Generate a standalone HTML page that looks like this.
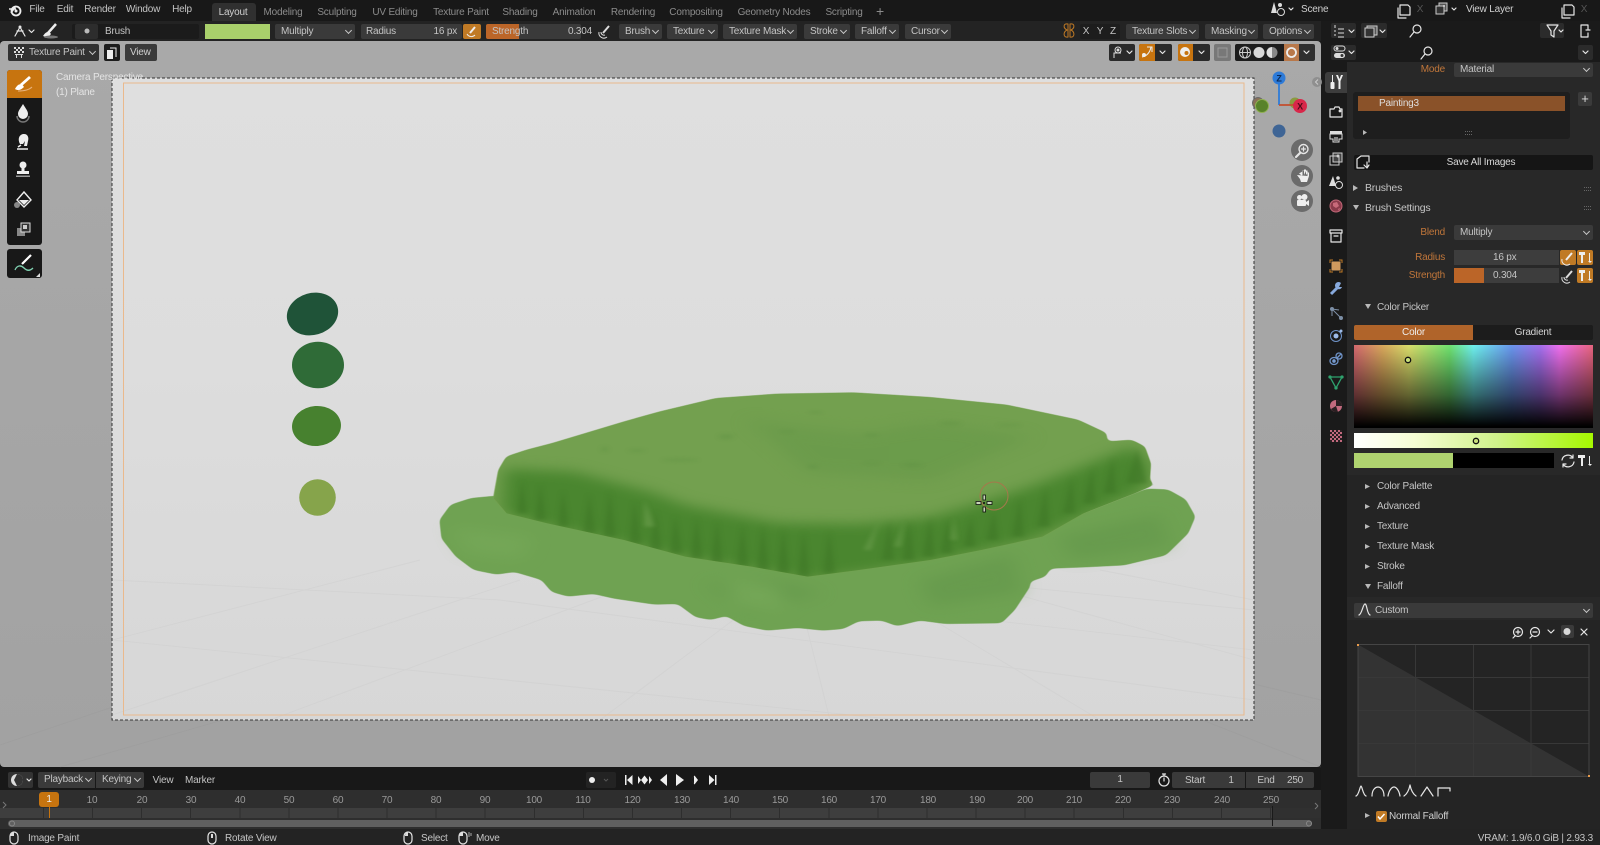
<!DOCTYPE html>
<html><head><meta charset="utf-8"><title>Blender Texture Paint</title>
<style>
*{box-sizing:border-box}
html,body{margin:0;padding:0;width:1600px;height:845px;overflow:hidden;background:#181818}
body{font:10px/17px "Liberation Sans",sans-serif;letter-spacing:-.2px;color:#c4c4c4;position:relative}
.a{position:absolute;white-space:nowrap}
.c{position:absolute;white-space:nowrap;transform:translateX(-50%)}
.r{position:absolute;white-space:nowrap;transform:translateX(-100%)}
.b{position:absolute;background:#3a3a3a;border-radius:2px;padding-left:6px;white-space:nowrap;color:#c4c4c4}
.d::after{content:"";position:absolute;right:4px;top:50%;width:4px;height:4px;margin-top:-4px;border-right:1px solid #c8c8c8;border-bottom:1px solid #c8c8c8;transform:rotate(45deg)}
.o{color:#c0763a}
svg{position:absolute;left:0;top:0}
.w{stroke:#e6e6e6;fill:none;stroke-width:1.2;stroke-linecap:round;stroke-linejoin:round}
.f{fill:#e6e6e6;stroke:none}
</style></head><body>

<!-- 3D viewport -->
<div class="a" style="left:0;top:41px;width:1321px;height:726px;background:linear-gradient(#a9a9a9,#a5a5a5 60%,#a2a2a2);border-radius:4px;overflow:hidden"></div>
<svg width="1600" height="845" viewBox="0 0 1600 845">
<defs>
<linearGradient id="fr" x1="0" y1="0" x2="0" y2="1"><stop offset="0" stop-color="#dfdfdf"/><stop offset=".45" stop-color="#dddddd"/><stop offset="1" stop-color="#d7d7d7"/></linearGradient>
<filter id="goo" x="-10%" y="-10%" width="120%" height="120%" color-interpolation-filters="sRGB"><feGaussianBlur stdDeviation="6"/><feComponentTransfer><feFuncA type="linear" slope="6" intercept="-2.500"/></feComponentTransfer></filter>
<filter id="bl" x="-30%" y="-30%" width="160%" height="160%" color-interpolation-filters="sRGB"><feGaussianBlur stdDeviation="20"/></filter>
<filter id="bm" x="-20%" y="-20%" width="140%" height="140%" color-interpolation-filters="sRGB"><feGaussianBlur stdDeviation="18"/></filter>
<filter id="bs" x="-40%" y="-40%" width="180%" height="180%" color-interpolation-filters="sRGB"><feGaussianBlur stdDeviation="5"/></filter>
<clipPath id="tp"><path d="M145 355 155 270 170 230 210 210 260 190 400 125 470 95 580 55 700 42 850 38 1000 52 1150 75 1290 120 1345 160 1345 185 1395 180 1420 200 1432 250 1430 300 1438 315 1400 340 1300 400 1220 470 1100 510 1000 540 860 570 760 590 650 560 520 530 400 480 250 430 170 400Z"/></clipPath>
<clipPath id="frc"><rect x="112" y="78" width="1142" height="642"/></clipPath>
</defs>
<g stroke="#8f8f8f" opacity=".2" fill="none"><path d="M0 745 400 610M1321 700 900 600M60 767 500 640M1321 767 1000 640"/></g>
<rect x="112" y="78" width="1142" height="642" fill="url(#fr)"/>
<g clip-path="url(#frc)" stroke="#cbcbcb" stroke-width="1" fill="none" opacity=".38">
<path d="M112 715 520 580M112 640 420 560M270 720 620 590M600 720 760 600M830 720 800 600M1100 720 900 600M1254 660 1000 590M1254 600 1100 570"/>
<path d="M112 580 500 600 1254 700M112 640 900 720M900 610 1254 650M1000 585 1254 610"/>
</g>
<rect x="112" y="78" width="1142" height="642" fill="none" stroke="#333" stroke-dasharray="3 2" stroke-width="1"/>
<rect x="123.5" y="83" width="1120.5" height="632" fill="none" stroke="#eab98c" stroke-width="1"/>

<!-- paint blobs -->
<ellipse cx="312.500" cy="314" rx="26" ry="21" transform="rotate(-16 312.500 314)" fill="#1f5338"/>
<ellipse cx="318" cy="365" rx="26" ry="23.300" fill="#2f6b37"/>
<ellipse cx="316.500" cy="426" rx="24.500" ry="20" transform="rotate(-4 316.500 426)" fill="#47812f"/>
<circle cx="317.500" cy="497.500" r="18.300" fill="#86a44b"/>

<!-- grass -->
<g transform="translate(420 380) scale(.5102 .3333)">
<g filter="url(#goo)"><path d="M150 347 100 354 60 374 38 420 42 476 70 530 105 570 150 584 185 576 238 600 258 636 290 650 340 642 380 656 460 674 505 672 540 712 570 720 600 708 635 738 680 752 740 744 790 752 830 747 860 724 905 722 935 739 980 722 1030 732 1140 730 1166 690 1196 620 1196 605 1226 590 1236 566 1300 562 1380 556 1462 526 1506 460 1520 410 1501 358 1466 328 1425 326 1300 400Z" fill="#6fa252"/></g>
<g filter="url(#bl)" opacity=".55"><path d="M560 610 700 600 790 640 640 700ZM980 600 1160 520 1180 640 1000 680ZM1250 470 1450 400 1470 500 1280 540Z" fill="#62964a"/><path d="M600 600 700 620 720 690 620 680ZM60 440 220 470 200 540 90 520Z" fill="#78aa5a"/></g>
<g filter="url(#goo)"><path d="M143 355 153 270 169 229 209 209 259 189 400 124 470 94 580 54 700 41 850 37 1000 51 1150 74 1290 119 1346 159 1347 184 1395 179 1421 199 1433 250 1431 300 1439 315 1401 341 1301 401 1221 471 1100 511 1000 541 860 571 760 591 650 561 520 531 400 481 250 431 169 401Z" fill="#73a04f"/></g>
<g clip-path="url(#tp)">
<path d="M640 120 860 160 1000 130 1200 170 1000 300 760 280Z" fill="#659748" opacity=".5" filter="url(#bl)"/>
<path d="M165 265 300 275 450 335 520 375 700 428 860 432 1000 412 1100 368 1200 318 1300 258 1400 198 1432 260 1420 330 1200 480 1000 550 760 600 500 530 250 440 160 400Z" fill="#4a862f" filter="url(#bm)"/>
<g fill="#3c7424" opacity=".5" filter="url(#bs)">
<path d="M190 400 210 400 200 300ZM225 420 247 420 236 310ZM270 440 292 440 280 330ZM320 460 344 460 332 340ZM360 470 384 470 372 330ZM410 490 434 490 420 360ZM450 510 474 510 462 390ZM490 520 514 520 500 405ZM530 535 554 535 542 410ZM570 550 594 550 582 420ZM620 560 644 560 632 430ZM660 570 684 570 672 430ZM700 580 724 580 712 440ZM740 590 764 590 752 450ZM790 580 814 580 802 450ZM905 540 929 540 920 420ZM945 540 969 540 960 420ZM985 530 1009 530 1000 410ZM1020 520 1044 520 1034 415ZM1065 500 1089 500 1080 410ZM1110 480 1134 480 1125 390ZM1160 470 1184 470 1176 350ZM1210 440 1234 440 1226 320ZM1260 400 1284 400 1278 290ZM1300 370 1324 370 1318 260ZM1340 340 1364 340 1358 230ZM1385 310 1425 310 1405 205Z"/>
</g>
<g fill="#7aa85a" opacity=".45" filter="url(#bs)"><path d="M870 510 884 510 900 420ZM930 500 942 500 950 420ZM440 440 460 440 440 360ZM1040 480 1052 480 1046 410Z"/></g>
<g fill="#619345" opacity=".45" filter="url(#bs)"><ellipse cx="600" cy="170" rx="14" ry="8"/><ellipse cx="720" cy="155" rx="16" ry="4"/><ellipse cx="885" cy="165" rx="14" ry="5"/><ellipse cx="1040" cy="130" rx="20" ry="5"/><ellipse cx="1155" cy="135" rx="22" ry="3"/><ellipse cx="425" cy="212" rx="16" ry="4"/><ellipse cx="362" cy="208" rx="6" ry="8"/><ellipse cx="775" cy="97" rx="14" ry="4"/><ellipse cx="885" cy="250" rx="18" ry="4"/><ellipse cx="965" cy="255" rx="18" ry="7"/><ellipse cx="770" cy="260" rx="10" ry="7"/><ellipse cx="510" cy="240" rx="35" ry="4"/></g>
</g>
</g>
<!-- brush cursor -->
<circle cx="994" cy="496" r="14" fill="none" stroke="#a5784c" stroke-width="1"/>
<g fill="#c8d4b8" stroke="#111" stroke-width=".8"><rect x="976" y="501.500" width="5" height="3"/><rect x="987" y="501.500" width="5" height="3"/><rect x="983" y="495" width="2.500" height="5"/><rect x="983" y="507" width="2.500" height="5"/><rect x="983.500" y="502.500" width="1" height="1"/></g>
</svg>

<!-- Top bar -->
<div class="a" style="left:0;top:0;width:1600px;height:21px;background:#181818"></div>
<div class="a" style="left:0;top:21px;width:1600px;height:20px;background:#232323"></div>
<div class="a" style="top:1px;left:37px;transform:translateX(-50%)">File</div>
<div class="a" style="top:1px;left:65px;transform:translateX(-50%)">Edit</div>
<div class="a" style="top:1px;left:100px;transform:translateX(-50%)">Render</div>
<div class="a" style="top:1px;left:143px;transform:translateX(-50%)">Window</div>
<div class="a" style="top:1px;left:182px;transform:translateX(-50%)">Help</div>
<div class="a" style="left:212px;top:3px;width:44px;height:18px;background:#303030;border-radius:3px 3px 0 0"></div>
<div class="c" style="left:233px;top:4px;color:#d0d0d0">Layout</div>
<div class="c" style="left:283px;top:4px;color:#8c8c8c">Modeling</div>
<div class="c" style="left:337px;top:4px;color:#8c8c8c">Sculpting</div>
<div class="c" style="left:395px;top:4px;color:#8c8c8c">UV Editing</div>
<div class="c" style="left:461px;top:4px;color:#8c8c8c">Texture Paint</div>
<div class="c" style="left:520px;top:4px;color:#8c8c8c">Shading</div>
<div class="c" style="left:574px;top:4px;color:#8c8c8c">Animation</div>
<div class="c" style="left:633px;top:4px;color:#8c8c8c">Rendering</div>
<div class="c" style="left:696px;top:4px;color:#8c8c8c">Compositing</div>
<div class="c" style="left:774px;top:4px;color:#8c8c8c">Geometry Nodes</div>
<div class="c" style="left:844px;top:4px;color:#8c8c8c">Scripting</div>
<div class="c" style="left:880px;top:3px;color:#8c8c8c;font-size:14px">+</div>
<div class="a" style="left:1301px;top:1px;color:#d0d0d0">Scene</div>
<div class="a" style="left:1466px;top:1px;color:#d0d0d0">View Layer</div>
<div class="c" style="left:1420px;top:1px;color:#555">X</div>
<div class="c" style="left:1584px;top:1px;color:#555">X</div>

<!-- Tool header -->
<div class="a" style="left:72px;top:24px;width:127px;height:15px;background:#1b1b1b;border-radius:2px"></div>
<div class="a" style="left:75px;top:24px;width:23px;height:15px;background:#2d2d2d;border-radius:2px"></div>
<div class="a" style="left:105px;top:23px">Brush</div>
<div class="a" style="left:205px;top:24px;width:65px;height:15px;background:#a9d06b"></div>
<div class="b d" style="left:275px;top:24px;width:80px;height:15px;line-height:15px">Multiply</div>
<div class="b" style="left:361px;top:24px;width:101px;height:15px;padding-left:5px;line-height:15px">Radius<span class="r" style="left:96px">16 px</span></div>
<div class="a" style="left:463px;top:24px;width:18px;height:15px;background:#c07a25;border-radius:2px"></div>
<div class="a" style="left:486px;top:24px;width:95px;height:15px;background:#3a3a3a;border-radius:2px"></div>
<div class="a" style="left:486px;top:24px;width:33px;height:15px;background:#bb6528;border-radius:2px 0 0 2px"></div>
<div class="a" style="left:492px;top:23px">Strength</div>
<div class="r" style="left:592px;top:23px">0.304</div>
<div class="b d" style="left:619px;top:24px;width:43px;height:15px;line-height:15px">Brush</div>
<div class="b d" style="left:667px;top:24px;width:51px;height:15px;line-height:15px">Texture</div>
<div class="b d" style="left:723px;top:24px;width:74px;height:15px;line-height:15px">Texture Mask</div>
<div class="b d" style="left:804px;top:24px;width:46px;height:15px;line-height:15px">Stroke</div>
<div class="b d" style="left:855px;top:24px;width:44px;height:15px;line-height:15px">Falloff</div>
<div class="b d" style="left:905px;top:24px;width:46px;height:15px;line-height:15px">Cursor</div>
<div class="a" style="left:1080px;top:24px;width:40px;height:15px;background:#1d1d1d;border-radius:2px"></div>
<div class="c" style="left:1086px;top:23px">X</div>
<div class="c" style="left:1100px;top:23px">Y</div>
<div class="c" style="left:1113px;top:23px">Z</div>
<div class="b d" style="left:1126px;top:24px;width:73px;height:15px;line-height:15px">Texture Slots</div>
<div class="b d" style="left:1205px;top:24px;width:53px;height:15px;line-height:15px">Masking</div>
<div class="b d" style="left:1263px;top:24px;width:51px;height:15px;line-height:15px">Options</div>

<!-- Viewport header -->
<div class="b d" style="left:8px;top:44px;width:91px;height:17px;background:#313131;padding:0 0 0 21px">Texture Paint</div>
<div class="a" style="left:104px;top:44px;width:16px;height:17px;background:#1c1c1c;border-radius:2px"></div>
<div class="b" style="left:125px;top:44px;width:32px;height:17px;background:#3a3a3a;padding:0 0 0 5px;color:#d0d0d0">View</div>
<div class="a" style="left:1109px;top:44px;width:26px;height:17px;background:#2a2a2a;border-radius:2px"></div>
<div class="a" style="left:1139px;top:44px;width:33px;height:17px;background:#2a2a2a;border-radius:2px"></div>
<div class="a" style="left:1139px;top:44px;width:16px;height:17px;background:#c7740f;border-radius:2px 0 0 2px"></div>
<div class="a" style="left:1178px;top:44px;width:32px;height:17px;background:#2a2a2a;border-radius:2px"></div>
<div class="a" style="left:1178px;top:44px;width:15px;height:17px;background:#c7740f;border-radius:2px 0 0 2px"></div>
<div class="a" style="left:1214px;top:44px;width:17px;height:17px;background:#787878;border-radius:2px"></div>
<div class="a" style="left:1235px;top:44px;width:65px;height:17px;background:#1c1c1c;border-radius:2px 0 0 2px"></div>
<div class="a" style="left:1284px;top:44px;width:15px;height:17px;background:#b8784a"></div>
<div class="a" style="left:1299px;top:44px;width:16px;height:17px;background:#2f2f2f;border-radius:0 2px 2px 0"></div>
<div class="a" style="left:56px;top:69px;color:#e4e4e4">Camera Perspective</div>
<div class="a" style="left:56px;top:84px;color:#e4e4e4">(1) Plane</div>

<!-- Toolbar -->
<div class="a" style="left:7px;top:70px;width:35px;height:175px;background:#181818;border-radius:3px"></div>
<div class="a" style="left:7px;top:70px;width:35px;height:28px;background:#c7740f;border-radius:3px 3px 0 0"></div>
<div class="a" style="left:7px;top:249px;width:35px;height:29px;background:#181818;border-radius:3px"></div>

<!-- Right column -->
<div class="a" style="left:1321px;top:41px;width:279px;height:788px;background:#1a1a1a"></div>
<div class="a" style="left:1347px;top:62px;width:253px;height:767px;background:#282828"></div>
<div class="a" style="left:1321px;top:21px;width:279px;height:41px;background:#1a1a1a"></div>
<div class="a" style="left:1331px;top:23px;width:25px;height:15px;background:#2b2b2b;border-radius:2px"></div>
<div class="a" style="left:1361px;top:23px;width:26px;height:15px;background:#2b2b2b;border-radius:2px"></div>
<div class="a" style="left:1331px;top:45px;width:25px;height:15px;background:#2b2b2b;border-radius:2px"></div>
<div class="a" style="left:1578px;top:45px;width:15px;height:15px;background:#2b2b2b;border-radius:2px"></div>
<div class="a" style="left:1540px;top:23px;width:24px;height:15px;background:#2b2b2b;border-radius:2px"></div>
<div class="a" style="left:1325px;top:72px;width:22px;height:21px;background:#3d3d3d;border-radius:3px 0 0 3px"></div>

<div class="r o" style="left:1445px;top:61px">Mode</div>
<div class="b d" style="left:1454px;top:63px;width:139px;height:14px;line-height:14px;padding-left:6px">Material</div>
<div class="a" style="left:1353px;top:92px;width:217px;height:47px;background:#1e1e1e;border-radius:3px"></div>
<div class="a" style="left:1358px;top:96px;width:207px;height:15px;background:#8a5229;padding-left:21px;color:#dedede;line-height:15px">Painting3</div>
<div class="a" style="left:1578px;top:92px;width:14px;height:14px;background:#3a3a3a;border-radius:2px;color:#ddd;text-align:center;font-size:13px;line-height:13px">+</div>
<div class="a" style="left:1354px;top:155px;width:239px;height:15px;background:#151515;border-radius:2px"></div>
<div class="c" style="left:1481px;top:154px;color:#d8d8d8">Save All Images</div>
<div class="a" style="left:1365px;top:180px;font-size:10.500px">Brushes</div>
<div class="a" style="left:1365px;top:200px;font-size:10.500px">Brush Settings</div>
<div class="r o" style="left:1445px;top:224px">Blend</div>
<div class="b d" style="left:1454px;top:225px;width:139px;height:15px;padding-left:6px;line-height:15px">Multiply</div>
<div class="r o" style="left:1445px;top:249px">Radius</div>
<div class="a" style="left:1454px;top:250px;width:105px;height:15px;background:#3d3d3d"></div>
<div class="a" style="left:1493px;top:249px">16 px</div>
<div class="a" style="left:1560px;top:250px;width:16px;height:15px;background:#c07a25;border-radius:2px"></div>
<div class="a" style="left:1577px;top:250px;width:16px;height:15px;background:#c07a25;border-radius:2px"></div>
<div class="r o" style="left:1445px;top:267px">Strength</div>
<div class="a" style="left:1454px;top:268px;width:105px;height:15px;background:#3d3d3d"></div>
<div class="a" style="left:1454px;top:268px;width:30px;height:15px;background:#bb6528"></div>
<div class="a" style="left:1493px;top:267px">0.304</div>
<div class="a" style="left:1577px;top:268px;width:16px;height:15px;background:#c07a25;border-radius:2px"></div>
<div class="a" style="left:1377px;top:299px">Color Picker</div>
<div class="a" style="left:1354px;top:325px;width:119px;height:15px;background:#b0642a;color:#eee;text-align:center;border-radius:2px 0 0 2px;line-height:15px">Color</div>
<div class="a" style="left:1473px;top:325px;width:120px;height:15px;background:#1c1c1c;color:#d4d4d4;text-align:center;border-radius:0 2px 2px 0;line-height:15px">Gradient</div>
<div class="a" style="left:1354px;top:345px;width:239px;height:83px;background:linear-gradient(to bottom,rgba(0,0,0,0) 0,rgba(0,0,0,.55) 60%,#000 98%),linear-gradient(to right,#d4696f,#d9a85c 12%,#d9dd6b 23%,#6fe26f 40%,#6ef0ee 50%,#6a96ee 66%,#a470ee 78%,#f070ee 86%,#e8657e 100%)"></div>
<div class="a" style="left:1354px;top:433px;width:239px;height:15px;background:linear-gradient(to right,#fff,#f6fdd4 25%,#cff28a 60%,#a6f800)"></div>
<div class="a" style="left:1354px;top:453px;width:99px;height:15px;background:#afd36f"></div>
<div class="a" style="left:1453px;top:453px;width:101px;height:15px;background:#000"></div>
<div class="a" style="left:1347px;top:475px;width:253px;height:122px;background:#242424"></div>
<div class="a" style="left:1377px;top:478px">Color Palette</div>
<div class="a" style="left:1377px;top:498px">Advanced</div>
<div class="a" style="left:1377px;top:518px">Texture</div>
<div class="a" style="left:1377px;top:538px">Texture Mask</div>
<div class="a" style="left:1377px;top:558px">Stroke</div>
<div class="a" style="left:1377px;top:578px">Falloff</div>
<div class="b d" style="left:1354px;top:603px;width:239px;height:15px;padding-left:21px;line-height:15px">Custom</div>
<div class="a" style="left:1347px;top:620px;width:253px;height:209px;background:#242424"></div>
<div class="a" style="left:1561px;top:625px;width:13px;height:13px;background:#3a3a3a;border-radius:2px"></div>
<div class="a" style="left:1376px;top:811px;width:11px;height:11px;background:#c07a25;border-radius:2px"></div>
<div class="a" style="left:1389px;top:808px;color:#d0d0d0">Normal Falloff</div>

<!-- Timeline -->
<div class="a" style="left:0;top:768px;width:1321px;height:22px;background:#181818"></div>
<div class="a" style="left:0;top:790px;width:1321px;height:39px;background:#2e2e2e"></div>
<div class="a" style="left:0;top:808px;width:1272px;height:10px;background:#3e3e3e"></div>
<div class="a" style="left:1272px;top:808px;width:49px;height:10px;background:#303030"></div>
<div class="a" style="left:43.200px;top:808px;width:1229px;height:10px;background:repeating-linear-gradient(90deg,#2e2e2e 0 1px,transparent 1px 49.08px)"></div>
<div class="a" style="left:8px;top:820px;width:1304px;height:7px;background:#606060;border-radius:4px"></div>
<div class="a" style="left:8px;top:772px;width:25px;height:16px;background:#333;border-radius:2px"></div>
<div class="b d" style="left:38px;top:772px;width:57px;height:16px;padding-left:6px;line-height:16px;background:#3a3a3a;border-radius:2px 0 0 2px">Playback</div>
<div class="b d" style="left:96px;top:772px;width:48px;height:16px;padding-left:6px;line-height:16px;background:#3a3a3a;border-radius:0 2px 2px 0">Keying</div>
<div class="c" style="left:163px;top:772px">View</div>
<div class="c" style="left:200px;top:772px">Marker</div>
<div class="a" style="left:586px;top:772px;width:30px;height:16px;background:#232323;border-radius:2px"></div>
<div class="a" style="left:1090px;top:772px;width:60px;height:16px;background:#3a3a3a;border-radius:2px;text-align:center;line-height:16px">1</div>
<div class="a" style="left:1172px;top:772px;width:73px;height:16px;background:#3a3a3a;border-radius:2px 0 0 2px"></div>
<div class="a" style="left:1246px;top:772px;width:68px;height:16px;background:#3a3a3a;border-radius:0 2px 2px 0"></div>
<div class="c" style="left:1195px;top:772px">Start</div><div class="c" style="left:1231px;top:772px">1</div>
<div class="c" style="left:1266px;top:772px">End</div><div class="c" style="left:1295px;top:772px">250</div>
<div class="a" style="left:39px;top:792px;width:20px;height:15px;background:#c7740f;border-radius:3px;color:#eee;text-align:center;line-height:15px">1</div>
<div class="a" style="left:48.500px;top:806px;width:1px;height:12px;background:#c7740f"></div>
<div class="a" style="left:1272px;top:806px;width:1px;height:20px;background:#1a1a1a"></div>
<div style="color:#9a9a9a">
<div class="c" style="left:92px;top:792px">10</div><div class="c" style="left:142px;top:792px">20</div><div class="c" style="left:191px;top:792px">30</div><div class="c" style="left:240px;top:792px">40</div><div class="c" style="left:289px;top:792px">50</div><div class="c" style="left:338px;top:792px">60</div><div class="c" style="left:387px;top:792px">70</div><div class="c" style="left:436px;top:792px">80</div><div class="c" style="left:485px;top:792px">90</div><div class="c" style="left:534px;top:792px">100</div><div class="c" style="left:583px;top:792px">110</div><div class="c" style="left:632.500px;top:792px">120</div><div class="c" style="left:682px;top:792px">130</div><div class="c" style="left:731px;top:792px">140</div><div class="c" style="left:780px;top:792px">150</div><div class="c" style="left:829px;top:792px">160</div><div class="c" style="left:878px;top:792px">170</div><div class="c" style="left:928px;top:792px">180</div><div class="c" style="left:977px;top:792px">190</div><div class="c" style="left:1025px;top:792px">200</div><div class="c" style="left:1074px;top:792px">210</div><div class="c" style="left:1123px;top:792px">220</div><div class="c" style="left:1172px;top:792px">230</div><div class="c" style="left:1222px;top:792px">240</div><div class="c" style="left:1271px;top:792px">250</div>
</div>

<!-- Status bar -->
<div class="a" style="left:0;top:829px;width:1600px;height:16px;background:#232323"></div>
<div class="a" style="left:28px;top:830px">Image Paint</div>
<div class="a" style="left:225px;top:830px">Rotate View</div>
<div class="a" style="left:421px;top:830px">Select</div>
<div class="a" style="left:476px;top:830px">Move</div>
<div class="r" style="left:1593px;top:830px">VRAM: 1.9/6.0 GiB | 2.93.3</div>

<!-- Icon overlay -->
<svg width="1600" height="845" viewBox="0 0 1600 845">
<!-- blender logo -->
<g transform="translate(15 10)"><circle cx="1" cy="1" r="4.500" fill="none" stroke="#eee" stroke-width="1.800"/><path d="M-6 -1H1M-4 3 1-4" stroke="#eee" stroke-width="1.500" fill="none"/><circle cx="1" cy="1" r="1.500" fill="#eee"/></g>
<!-- header editor icon -->
<g transform="translate(20 31)" class="w"><path d="M-5 5 0-4 5 5M-3 0H3"/><circle cx="0" cy="-4" r="1.500" class="f"/></g>
<path d="M29 30l2.500 2.500L34 30" class="w" stroke-width="1"/>
<!-- header brush -->
<g transform="translate(51 31)"><path d="M-3 2 5-7" stroke="#eee" stroke-width="2.500"/><path d="M-8 5C-5 0-2 0 0 3-2 6-6 6-8 5Z" fill="#eee"/><ellipse cx="0" cy="6" rx="7" ry="1.500" fill="#777"/></g>
<circle cx="87" cy="31" r="2.500" fill="#bbb"/>
<!-- radius/strength pen icons -->
<g transform="translate(472 31)"><path d="M-2 2 3-4" stroke="#eee" stroke-width="2"/><path d="M-5 3A5 5 0 0 0 3 4" stroke="#eee" fill="none"/></g>
<g transform="translate(605 31)"><path d="M-2 2 4-5" stroke="#ddd" stroke-width="2"/><path d="M-6 1A5 5 0 0 0 2 6M-4 1A3 3 0 0 0 0 4" stroke="#ddd" fill="none"/></g>
<g transform="translate(1069 31)" stroke="#c07a25" fill="none"><path d="M-1-7C-6-8-6-3-2-1-6 1-6 7-1 6ZM1-7C6-8 6-3 2-1 6 1 6 7 1 6Z"/></g>
<!-- view 3d header icons -->
<g fill="#ddd"><rect x="14" y="47" width="2" height="2"/><rect x="18" y="47" width="2" height="2"/><rect x="22" y="47" width="2" height="2"/><rect x="16" y="49" width="2" height="2"/><rect x="20" y="49" width="2" height="2"/><rect x="14" y="51" width="2" height="2"/><rect x="18" y="51" width="2" height="2"/><rect x="22" y="51" width="2" height="2"/><rect x="15" y="54" width="8" height="1"/><rect x="16" y="55" width="1" height="3"/><rect x="21" y="55" width="1" height="3"/></g>
<path d="M107 50h6v9h-6z" fill="#eee"/><path d="M110 48h6v9" fill="none" stroke="#eee"/>
<g transform="translate(1118 52)" stroke="#ddd" fill="none"><circle cx="0" cy="-2" r="3"/><circle cx="0" cy="-2" r="1" fill="#ddd"/><path d="M-4 6V1H3"/></g>
<path d="M1127 51l2.500 2.500 2.500-2.500" class="w"/>
<g transform="translate(1147 52)" stroke="#eee" fill="none"><path d="M-5 5C0 4 3 0 4-5M0-5H5V0"/><circle cx="-3" cy="3" r="1.500" fill="#eee"/></g>
<path d="M1160 51l2.500 2.500 2.500-2.500" class="w"/>
<g transform="translate(1185 52)"><circle r="5" fill="#eee"/><circle r="2" cx="1.500" cy="1" fill="#c7740f"/></g>
<path d="M1199 51l2.500 2.500 2.500-2.500" class="w"/>
<rect x="1218" y="48" width="9" height="9" fill="none" stroke="#9a9a9a"/>
<g transform="translate(1245 52.500)" stroke="#ccc" fill="none"><circle r="5.500"/><ellipse rx="2.500" ry="5.500"/><path d="M-5.500 0H5.500"/></g>
<circle cx="1259" cy="52.500" r="5.500" fill="#d8d8d8"/>
<path d="M1272 47A5.500 5.500 0 0 0 1272 58Z" fill="#e0e0e0"/><path d="M1272 47A5.500 5.500 0 0 1 1272 58Z" fill="#888"/>
<circle cx="1291.500" cy="52.500" r="4.500" fill="none" stroke="#eee" stroke-width="1.800"/>
<path d="M1304 51l2.500 2.500 2.500-2.500" class="w"/>

<!-- toolbar icons -->
<g transform="translate(24 84)"><path d="M-3 1 6-7" stroke="#fff" stroke-width="2.800"/><path d="M-9 5C-6-1-2-1 0 3-3 6-6 7-9 5Z" fill="#fff"/><path d="M-6 7C-1 7 5 6 8 3" stroke="#e8b27c" fill="none"/></g>
<g transform="translate(23 112)"><path d="M0-8C3-3 5-1 5 2A5 5 0 0 1-5 2C-5-1-3-3 0-8Z" fill="#eee"/><path d="M-6 4A6 6 0 0 0 6 4" stroke="#777" stroke-width="1.500" fill="none"/></g>
<g transform="translate(23 142)"><path d="M-3 2C-6-4-3-8 1-8 5-8 6-4 5-1L4 4H1L2-1 0 2Z" fill="#eee"/><path d="M-6 7H5M-5 5 -2 3" stroke="#eee" stroke-width="1.500"/></g>
<g transform="translate(23 170)" fill="#eee"><circle cy="-5" r="3.500"/><rect x="-1.500" y="-3" width="3" height="4"/><rect x="-6" y="1" width="12" height="3"/><rect x="-7" y="5.500" width="14" height="1.500" fill="#999"/></g>
<g transform="translate(24 200)"><path d="M0-8 7 0 0 7-7 0Z" fill="none" stroke="#eee" stroke-width="1.400"/><path d="M-5 0H5L0 5Z" fill="#eee"/><circle cx="-7" cy="5" r="3" fill="#888"/></g>
<g transform="translate(23 230)"><rect x="-6" y="-2" width="8" height="8" fill="#888"/><rect x="-2" y="-7" width="9" height="9" fill="#333" stroke="#ddd"/><rect x="0" y="-5" width="4" height="4" fill="#ccc"/></g>
<g transform="translate(24 263)"><path d="M-2 1 7-8" stroke="#fff" stroke-width="2.200"/><path d="M-9 7C-7 2-3 2 0 5 3 8 6 8 9 5" stroke="#7fd0b0" stroke-width="1.300" fill="none"/></g>
<path d="M36 277l4 0 0-4z" fill="#ddd"/>

<!-- scene / view layer -->
<g transform="translate(1278 9)"><path d="M-4-7-7 4H-1Z" fill="#ddd"/><circle cx="2" cy="-4" r="2" fill="#ddd"/><circle cx="3" cy="3" r="3.500" fill="none" stroke="#ddd"/></g>
<path d="M1289 8l2 2 2-2" class="w"/>
<g class="w"><path d="M1400 5h8l2 2v8h-10zM1398 8v10h8"/><path d="M1564 5h8l2 2v8h-10zM1562 8v10h8"/></g>
<g transform="translate(1442 9)"><rect x="-3" y="-6" width="8" height="8" fill="#555" stroke="#ccc"/><rect x="-6" y="-3" width="8" height="8" fill="#333" stroke="#ccc"/><circle cx="2" cy="-3" r="1" fill="#ddd"/></g>
<path d="M1452 8l2 2 2-2" class="w"/>
<!-- outliner / properties header -->
<g transform="translate(1339 31)" stroke="#ddd"><path d="M-4-6V-3M-4-1V1M-4 3V5M-1-2H5M-1 2H5M-1 6H5"/></g>
<path d="M1349 30l2.500 2.500 2.500-2.500" class="w"/>
<g transform="translate(1371 31)"><rect x="-4" y="-5" width="10" height="9" fill="#555" stroke="#ccc"/><rect x="-6" y="-3" width="9" height="9" fill="#333" stroke="#ccc"/></g>
<path d="M1380 30l2.500 2.500 2.500-2.500" class="w"/>
<g class="w"><circle cx="1417" cy="29" r="4"/><path d="M1414 32 1410 37"/><circle cx="1428" cy="51" r="4"/><path d="M1425 54 1421 59"/></g>
<g class="w"><path d="M1547 25H1558L1554 31V37L1551 35V31Z"/><path d="M1559 30l2 2 2-2"/><path d="M1581 25h7v4M1581 25v12h7M1586 30h4M1588 33v4"/></g>
<g transform="translate(1340 52)"><rect x="-6" y="-6" width="11" height="5" rx="2.500" fill="none" stroke="#ddd"/><rect x="-6" y="1" width="11" height="5" rx="2.500" fill="#ddd"/><circle cx="2" cy="3.500" r="1.500" fill="#333"/><circle cx="-3" cy="-3.500" r="1.500" fill="#ddd"/></g>
<path d="M1349 51l2.500 2.500 2.500-2.500M1583 51l2.500 2.500 2.500-2.500" class="w"/>

<!-- nav tabs -->
<g transform="translate(1336 82)" fill="#eee"><rect x="-5.500" y="0" width="4" height="7" rx="1"/><rect x="-4" y="-7" width="1" height="7"/><path d="M2-7 3.500-3 5-7H7L4.500-1V7H2.500V-1L0-7Z"/></g>
<g transform="translate(1336 112)" class="w"><path d="M-6-3H-2L-1-5H3L4-3H6V5H-6Z"/><circle cx="4" cy="-1" r=".8"/></g>
<g transform="translate(1336 136)"><rect x="-6" y="-5" width="12" height="3" fill="#ddd"/><path d="M-6-2H6V3H3V6H-3V3H-6Z" fill="none" stroke="#ddd"/><rect x="-2" y="1" width="4" height="4" fill="#888"/></g>
<g transform="translate(1336 159)" stroke="#ccc"><rect x="-3" y="-6" width="9" height="9" fill="#444"/><rect x="-6" y="-3" width="9" height="9" fill="none"/><circle cx="2" cy="-3" r="1" fill="#ddd"/></g>
<g transform="translate(1336 182)"><path d="M-3-6-7 4H0Z" fill="#ddd"/><circle cx="2" cy="-4" r="1.800" fill="#ddd"/><circle cx="3" cy="3" r="3.500" fill="none" stroke="#ddd"/></g>
<g transform="translate(1336 206)"><circle r="6" fill="#8a3a4a" stroke="#c06878"/><path d="M-3-3 1-4 3 0 0 2-3 0ZM2 3 4 2 3 5Z" fill="#c86a7a"/></g>
<g transform="translate(1336 236)" class="w"><path d="M-6-6H6V-3H-6ZM-5-3V6H5V-3M-2 0H2"/></g>
<g transform="translate(1336 266)"><rect x="-4.500" y="-4.500" width="9" height="9" fill="#d09a5e"/><path d="M-6-3V-6H-3M3-6H6V-3M6 3V6H3M-3 6H-6V3" stroke="#c07a25" fill="none"/></g>
<g transform="translate(1336 289)"><path d="M-5 5 1-1" stroke="#87a9dc" stroke-width="3"/><path d="M5-6A3.500 3.500 0 0 0 0-1 3.500 3.500 0 0 0 6-2L3-2Z" fill="#87a9dc"/></g>
<g transform="translate(1336 313)" stroke="#7d8fa6" fill="none"><path d="M-4-4 5 5M-4-4V3M-4-4 3-3"/><circle cx="-4" cy="-4" r="1.500" fill="#7d8fa6"/><circle cx="5" cy="5" r="1.500" fill="#7d8fa6"/></g>
<g transform="translate(1336 336)"><circle r="5.500" fill="none" stroke="#6f93c8"/><circle r="2.500" fill="#9dbbe8"/><circle cx="5" cy="-5" r="1.500" fill="#9dbbe8"/></g>
<g transform="translate(1336 359)" fill="none" stroke="#6f93c8" stroke-width="1.300"><ellipse cx="-2" cy="2" rx="4" ry="3.500"/><path d="M1-1 5-5"/><circle cx="-2" cy="2" r="1.200" fill="#9dbbe8"/><ellipse cx="3" cy="-3" rx="3" ry="3" transform="rotate(45 3 -3)"/></g>
<g transform="translate(1336 382)" fill="none" stroke="#2fa26e" stroke-width="1.300"><path d="M-6-5H6L0 6Z"/><circle cx="-6" cy="-5" r="1" fill="#2fa26e"/><circle cx="6" cy="-5" r="1" fill="#2fa26e"/><circle cy="6" r="1" fill="#2fa26e"/></g>
<g transform="translate(1336 406)"><circle r="6" fill="#c26a7e"/><path d="M0 0V-6A6 6 0 0 1 6 0ZM0 0-5 3A6 6 0 0 0 2 6Z" fill="#2a1f22"/></g>
<g transform="translate(1336 436)"><rect x="-6" y="-6" width="12" height="12" fill="#c26a7e"/><path d="M-4-6h2v2h-2zM0-6h2v2H0zM4-6h2v2H4zM-6-4h2v2h-2zM-2-4h2v2h-2zM2-4h2v2H2zM-4-2h2v2h-2zM0-2h2v2H0zM4-2h2v2H4zM-6 0h2v2h-2zM-2 0h2v2h-2zM2 0h2v2H2zM-4 2h2v2h-2zM0 2h2v2H0zM4 2h2v2H4zM-6 4h2v2h-2zM-2 4h2v2h-2zM2 4h2v2H2z" fill="#2a1f22"/></g>

<!-- panels small -->
<g fill="#b8b8b8"><path d="M1363 130v5l4-2.500zM1353 185v6l5-3zM1353 205h6l-3 5zM1365 304h6l-3 5zM1365 484v5l5-2.500zM1365 504v5l5-2.500zM1365 524v5l5-2.500zM1365 544v5l5-2.500zM1365 564v5l5-2.500zM1365 584h6l-3 5zM1365 813v5l5-2.500z"/></g>
<g fill="#666"><path d="M1465 131h1v1h-1zM1467 131h1v1h-1zM1469 131h1v1h-1zM1471 131h1v1h-1zM1465 134h1v1h-1zM1467 134h1v1h-1zM1469 134h1v1h-1zM1471 134h1v1h-1zM1584 187h1v1h-1zM1586 187h1v1h-1zM1588 187h1v1h-1zM1590 187h1v1h-1zM1584 190h1v1h-1zM1586 190h1v1h-1zM1588 190h1v1h-1zM1590 190h1v1h-1zM1584 206h1v1h-1zM1586 206h1v1h-1zM1588 206h1v1h-1zM1590 206h1v1h-1zM1584 209h1v1h-1zM1586 209h1v1h-1zM1588 209h1v1h-1zM1590 209h1v1h-1z"/></g>
<g transform="translate(1363 162)" class="w" stroke-width="1.300"><path d="M-6 6V-3L-2-6H6V0M-6 6H1M1 3 4 6 6 3M4 6V0"/></g>
<g transform="translate(1568 258)"><path d="M-2 2 4-5" stroke="#eee" stroke-width="2"/><path d="M-6 1A5 5 0 0 0 2 6" stroke="#eee" fill="none"/></g>
<g transform="translate(1568 276)"><path d="M-2 2 4-5" stroke="#ddd" stroke-width="2"/><path d="M-6 1A5 5 0 0 0 2 6M-4 1A3 3 0 0 0 0 4" stroke="#ddd" fill="none"/></g>
<g fill="#eee"><path d="M1579 252h6v3h-2v8h-2v-8h-2zM1589 253h1v8h2l-2 2-2-2h1z"/><path d="M1579 270h6v3h-2v8h-2v-8h-2zM1589 271h1v8h2l-2 2-2-2h1z"/></g>
<!-- color cursors -->
<circle cx="1408" cy="360" r="2.700" fill="#c8e07a" stroke="#111" stroke-width="1.300"/>
<circle cx="1476" cy="441" r="2.700" fill="#c8e07a" stroke="#111" stroke-width="1.300"/>
<g transform="translate(1568 461)" class="w"><path d="M-6-1A6 6 0 0 1 5-3M6 1A6 6 0 0 1-5 3M5-6V-3H2M-5 6V3H-2"/></g>
<g fill="#eee"><path d="M1578 455h7v3h-2v8h-2v-8h-3zM1589 456h1v8h2l-2 2-2-2h1z"/></g>
<!-- falloff dropdown icon -->
<path d="M1359 615C1362 614 1363 604 1365 604S1367 614 1370 615" class="w"/>
<g class="w"><circle cx="1518" cy="632" r="4.500"/><path d="M1516 632h4M1518 630v4M1515 636l-2 2"/><circle cx="1535" cy="632" r="4.500"/><path d="M1533 632h4M1532 636l-2 2"/><path d="M1548 630l3 3 3-3"/><path d="M1581 629l6 6M1587 629l-6 6"/></g>
<circle cx="1567" cy="631.500" r="3.500" fill="#d8d8d8"/>
<!-- curve -->
<rect x="1358" y="644.500" width="231" height="132" fill="#242424"/>
<path d="M1358 644.500 1589 776.500H1358Z" fill="#333"/>
<g stroke="#383838" fill="none"><path d="M1415.500 644.500V776.500M1473.500 644.500V776.500M1531 644.500V776.500M1358 677.500H1589M1358 710.500H1589M1358 743.500H1589"/><rect x="1358" y="644.500" width="231" height="132" stroke="#454545"/></g>
<rect x="1357" y="644" width="2" height="2" fill="#e89a4a"/><rect x="1588" y="775" width="2" height="2" fill="#e89a4a"/>
<g class="w" stroke-width="1"><path d="M1356 796C1359 795 1360 786 1361 786S1363 795 1366 796M1372 796C1372 789 1376 787 1378 787S1384 789 1384 796M1388 796C1389 790 1392 787 1394 787S1399 790 1400 796M1404 796C1407 794 1409 790 1410 785 1411 790 1413 794 1416 796M1421 796 1427 787 1433 796M1438 796V788H1450V791"/></g>
<path d="M1378 816.500l2 2.500 4.500-5" stroke="#fff" stroke-width="1.500" fill="none"/>

<!-- gizmo -->
<circle cx="1258" cy="103" r="5.500" fill="#8a7058" stroke="#6a6a6a"/>
<circle cx="1295" cy="103" r="5.500" fill="#8a9a40"/>
<path d="M1279 84V105" stroke="#2e7bd8" stroke-width="1.800"/>
<path d="M1279 105H1295" stroke="#c25030" stroke-width="1.800"/>
<circle cx="1279" cy="78" r="6.500" fill="#2e7bd8"/><text x="1279" y="81.500" font-family="Liberation Sans" font-size="9" font-weight="bold" text-anchor="middle" fill="#0d2a55">Z</text>
<circle cx="1300" cy="106" r="7" fill="#d8274a"/><text x="1300" y="109.500" font-family="Liberation Sans" font-size="9" font-weight="bold" text-anchor="middle" fill="#4c0a18">X</text>
<circle cx="1262" cy="106" r="6.500" fill="#58822a" stroke="#8fb050" stroke-width="1"/>
<circle cx="1279" cy="131" r="6.500" fill="#3f6595"/>
<circle cx="1317" cy="82" r="5" fill="#8f8f8f"/><path d="M1318 79.500 1315.500 82 1318 84.500" stroke="#ccc" fill="none"/>
<g fill="#6b6b6b"><circle cx="1302" cy="150" r="11"/><circle cx="1302" cy="176" r="11"/><circle cx="1302" cy="201" r="11"/></g>
<g class="w"><circle cx="1303.500" cy="149" r="4.500" stroke-width="1.400"/><path d="M1300 153 1296 157" stroke-width="2.200"/><path d="M1301.500 149h4M1303.500 147v4"/></g>
<path d="M1297 175 1300 179 1301 182H1307L1309 176V172.500H1307.500V176M1307.500 173V170.500H1306V175M1306 171V169.500H1304V175M1304 170.500H1302.500V176L1299 173.500Z" fill="#eee"/>
<g fill="#eee"><circle cx="1299.500" cy="197.500" r="2.500"/><circle cx="1304.500" cy="197" r="3"/><rect x="1297" y="200" width="9" height="6" rx="1"/><path d="M1306 202 1309 200V206L1306 204Z"/></g>

<!-- timeline icons -->
<g transform="translate(17 780)"><circle r="6" fill="#ddd"/><path d="M0-6A6 6 0 0 1 0 6L-3 0Z" fill="#333"/></g>
<path d="M27 779l2 2 2-2" class="w"/>
<circle cx="592" cy="780" r="3" fill="#eee"/>
<path d="M604 779l2 2 2-2" stroke="#555" fill="none"/>
<g fill="#eee"><path d="M625 775h1.500v10H625zM632.500 775v10L627 780z"/><path d="M641 780l-3-4v8zM648 780l-3.500-4.500L641 780l3.500 4.500zM652 780l-3-4v8z" /><path d="M667 774v12l-7-6z"/><path d="M676 774v12l8-6z"/><path d="M691 780l3-4v8l-3-4zM698 780l-3.500-4.500L691 780l3.500 4.500z"/><path d="M709 775v10l5.500-5zM715 775h1.500v10H715z"/></g>
<g transform="translate(1164 780)" class="w"><circle cy="1" r="5"/><path d="M0 1V-2M-1.500-6H1.500M0-6V-4"/></g>
<circle cx="12" cy="823.500" r="2.500" fill="none" stroke="#888"/>
<circle cx="1309" cy="823.500" r="2.500" fill="none" stroke="#888"/>
<path d="M3 802l3 3-3 3" stroke="#777" fill="none"/>
<path d="M1318 806l-3-3M1315 809l3-3" stroke="#777" fill="none"/>
<!-- status icons -->
<g class="w" stroke-width="1"><rect x="10" y="832" width="8" height="12" rx="4" /><rect x="208" y="832" width="8" height="12" rx="4"/><rect x="404" y="832" width="8" height="12" rx="4"/><rect x="459" y="832" width="8" height="12" rx="4"/></g>
<g fill="#ddd"><path d="M14 832a4 4 0 0 0-4 4h4zM405 836a4 4 0 0 1 3-4v4z"/><rect x="211" y="834" width="2" height="4"/><path d="M463 832a4 4 0 0 0-4 4h4z"/></g>
<path d="M469 832v5M471 833v3" stroke="#aaa" fill="none"/>
</svg>
</body></html>
